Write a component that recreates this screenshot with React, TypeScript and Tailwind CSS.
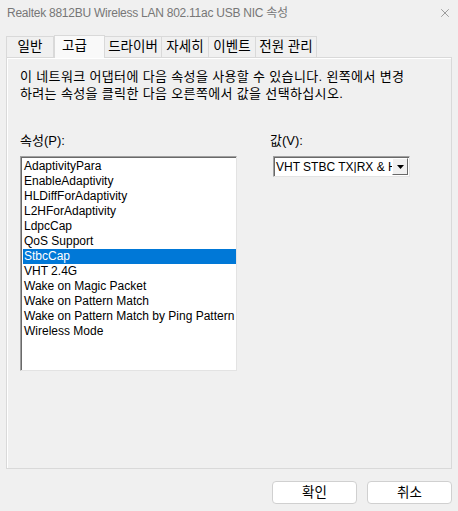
import { X } from "lucide-react";

const font = "font-['Liberation_Sans','Noto_Sans_CJK_KR',sans-serif]";

const tabs = ["일반", "고급", "드라이버", "자세히", "이벤트", "전원 관리"];
const tabWidths = ["w-[48px]", "w-[51px]", "w-[58px]", "w-[48px]", "w-[48px]", "w-[62px]"];

const props = [
  "AdaptivityPara",
  "EnableAdaptivity",
  "HLDiffForAdaptivity",
  "L2HForAdaptivity",
  "LdpcCap",
  "QoS Support",
  "StbcCap",
  "VHT 2.4G",
  "Wake on Magic Packet",
  "Wake on Pattern Match",
  "Wake on Pattern Match by Ping Pattern",
  "Wireless Mode",
];

export default function App() {
  const selected = "StbcCap";

  return (
    <div className={`w-[458px] h-[511px] bg-[#f0f0f0] text-[12px] text-black flex flex-col overflow-hidden ${font}`}>
      {/* title bar */}
      <div className="h-[25px] flex items-center justify-between pl-[7px] pr-[6px] pt-[1px]">
        <span className="text-[12px] tracking-[-0.25px] text-[#777777] leading-none">
          Realtek 8812BU Wireless LAN 802.11ac USB NIC 속성
        </span>
        <X className="w-[14px] h-[14px] text-[#777777]" strokeWidth={1.2} />
      </div>

      {/* tabs */}
      <div className="mt-[9px] pl-[6px] flex items-end h-[23px]">
        {tabs.map((t, i) =>
          t === "고급" ? (
            <div
              key={t}
              className={`${tabWidths[i]} h-[23px] -mb-px z-10 bg-[#f9f9f9] border border-b-0 border-[#d9d9d9] flex items-center pl-[7px] pb-[2px] text-[13.5px] leading-none`}>
              {t}
            </div>
          ) : (
            <div
              key={t}
              className={`${tabWidths[i]} h-[21px] bg-[#f0f0f0] border border-b-0 border-[#d9d9d9] flex items-center justify-center text-[13.5px] leading-none ${i === 0 ? "" : "-ml-px"}`}>
              {t}
            </div>
          )
        )}
      </div>

      {/* panel */}
      <div className="mx-[6px] h-[412px] border border-[#d9d9d9] bg-[#f0f0f0] shadow-[inset_1px_1px_0_#ffffff] pl-[13px] pr-[6px] pt-[10px]">
        <p className="leading-[17px] text-[13px] tracking-[0.35px] whitespace-nowrap">
          이 네트워크 어댑터에 다음 속성을 사용할 수 있습니다. 왼쪽에서 변경
          <br />
          하려는 속성을 클릭한 다음 오른쪽에서 값을 선택하십시오.
        </p>

        <div className="mt-[30px] flex">
          {/* left */}
          <div className="w-[217px] flex flex-col">
            <div className="h-[17px] leading-[17px] text-[13px]">속성(P):</div>
            <div className="mt-[7px] h-[215px] bg-white border border-[#a0a0a0] border-r-[#e3e3e3] border-b-[#e3e3e3] shadow-[inset_1px_1px_0_#696969] pt-[2px] pl-[2px] overflow-hidden">
              {props.map((p) => (
                <div
                  key={p}
                  className={`h-[15px] leading-[15px] pl-[1px] whitespace-nowrap text-[12px] ${
                    p === selected ? "bg-[#0078d7] text-white" : ""
                  }`}>
                  {p}
                </div>
              ))}
            </div>
          </div>

          {/* right */}
          <div className="ml-[36px] flex flex-col">
            <div className="h-[17px] leading-[17px] text-[13px] -ml-[3px]">값(V):</div>
            <div className="mt-[7px] w-[137px] h-[21px] bg-white border border-[#a0a0a0] border-r-[#e3e3e3] border-b-[#e3e3e3] shadow-[inset_1px_1px_0_#696969] flex items-center overflow-hidden">
              <span className="flex-1 pl-[2px] whitespace-nowrap overflow-hidden text-[12px] leading-none">
                VHT STBC TX|RX &amp; HT
              </span>
              <div className="w-[16px] h-[17px] mr-[1px] bg-[#f0f0f0] border border-[#ffffff] border-r-[#696969] border-b-[#696969] flex items-center justify-center">
                <svg width="7" height="4" viewBox="0 0 7 4">
                  <path d="M0 0h7L3.5 4z" fill="#000" />
                </svg>
              </div>
            </div>
          </div>
        </div>
      </div>

      {/* buttons */}
      <div className="mt-[12px] flex justify-end gap-[10px] pr-[6px]">
        <button className="w-[85px] h-[23px] bg-white border border-[#d0d0d0] rounded-[4px] text-[13.5px] leading-none">
          확인
        </button>
        <button className="w-[85px] h-[23px] bg-white border border-[#d0d0d0] rounded-[4px] text-[13.5px] leading-none">
          취소
        </button>
      </div>
    </div>
  );
}
